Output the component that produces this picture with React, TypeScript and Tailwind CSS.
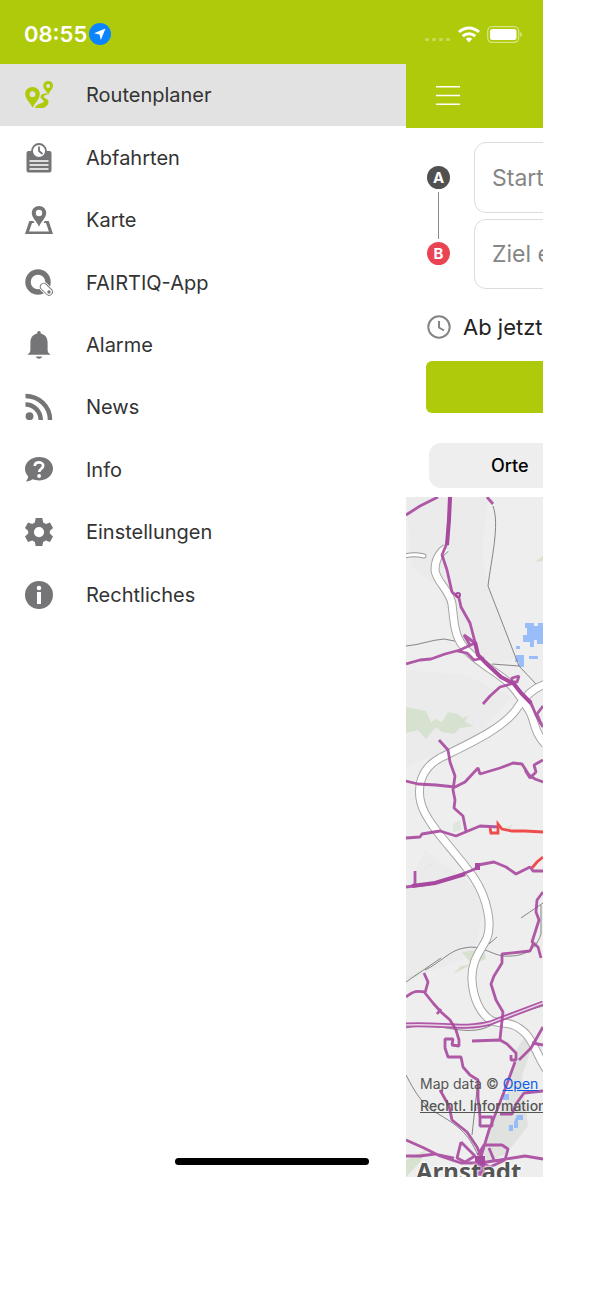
import { useState, type ReactNode } from "react";

const PlannerIcon = () => (
  <svg viewBox="0 0 28 28" className="size-7" fill="#afca0b" aria-hidden="true">
    <path fillRule="evenodd" d="M7.500 6C3.300 6 .2 9 .2 13c0 5 5 8.500 7.500 13.800C10 21.500 14.800 18 14.800 13c0-4-3.100-7-7.300-7Zm0 4.300a2.900 2.900 0 1 1 0 5.800 2.900 2.900 0 0 1 0-5.800Z" />
    <path fillRule="evenodd" d="M23.200 0c-2.800 0-4.900 2-4.900 4.800 0 3.600 3.500 5 4.900 9.200 1.300-4.200 4.800-5.600 4.800-9.200C28 2 25.900 0 23.200 0Zm0 2.900a2 2 0 1 1 0 4 2 2 0 0 1 0-4Z" />
    <path d="M21.500 12.200c-4 .2-6.200 2-5.900 4.100.3 2.100 3.500 2.500 3.200 4.300-.3 1.700-4.300 2-7.300 3.800L9.800 27h8.700c2.400-1.700 5-3.300 5-6.100 0-3.100-4.600-3.400-4.700-5.300 0-1.200 1.800-1.700 3.900-1.800Z" />
  </svg>
);

const DeparturesIcon = () => (
  <svg viewBox="0 0 28 30" className="h-[30px] w-7" aria-hidden="true">
    <path fill="#757577" d="M3.500 8h21a2 2 0 0 1 2 2v17.500a2 2 0 0 1-2 2h-21a2 2 0 0 1-2-2V10a2 2 0 0 1 2-2Z" />
    <circle cx="14" cy="8" r="7" fill="#fff" stroke="#757577" strokeWidth="1.800" />
    <path d="M14 3.500V8l3.500 3" fill="none" stroke="#757577" strokeWidth="1.800" />
    <path d="M4.500 18h19M4.500 22h19M4.500 26h19" stroke="#fff" strokeWidth="1.600" />
  </svg>
);

const MapIcon = () => (
  <svg viewBox="0 0 28 28" className="size-7" fill="#757577" aria-hidden="true">
    <path fillRule="evenodd" d="M14 0C9.800 0 6.800 3 6.800 7c0 5 5 8.200 7.200 13.700C16.200 15.200 21.200 12 21.200 7c0-4-3-7-7.200-7Zm0 3.800a3.200 3.200 0 1 1 0 6.400 3.200 3.200 0 0 1 0-6.400Z" />
    <path d="M4.300 15h4l1.200 2H7L4.100 25.500h19.800L21 17h-2.500l1.200-2h4L28 28H0Z" />
  </svg>
);

const FairtiqIcon = () => (
  <svg viewBox="0 0 28 28" className="size-7" aria-hidden="true">
    <circle cx="13" cy="13" r="10" fill="none" stroke="#757577" strokeWidth="5.500" />
    <path d="m18.800 17.800 5.200 5" stroke="#fff" strokeWidth="9.500" strokeLinecap="round" />
    <path d="m18.800 17.800 5.200 5" stroke="#757577" strokeWidth="7.800" strokeLinecap="round" />
    <path d="m18.800 17.800 5.200 5" stroke="#fff" strokeWidth="6" strokeLinecap="round" />
    <circle cx="24" cy="23" r="1.700" fill="#757577" />
  </svg>
);

const BellIcon = () => (
  <svg viewBox="0 0 28 28" className="size-7" fill="#757577" aria-hidden="true">
    <path d="M12.300 2.500a1.800 1.800 0 1 1 3.400 0c4.500 1 6.900 4.300 6.900 8.800V19c0 2 .8 3.200 3 4.700H2.400c2.200-1.500 3-2.700 3-4.700v-7.700c0-4.500 2.400-7.800 6.900-8.800Z" />
    <path d="M11 25.500h6c-.4 3-5.600 3-6 0Z" />
  </svg>
);

const NewsIcon = () => (
  <svg viewBox="0 0 28 28" className="size-7" fill="none" stroke="#757577" strokeWidth="4.500" aria-hidden="true">
    <circle cx="4.500" cy="23.200" r="3.900" fill="#757577" stroke="none" />
    <path d="M.5 11.500C9 11.500 15.800 18.500 15.800 27M.5 3C14 3 25 13.500 25 27" />
  </svg>
);

const InfoIcon = () => (
  <svg viewBox="0 0 28 28" className="size-7" aria-hidden="true">
    <path fill="#757577" d="M14 1C6.200 1 0 6.200 0 12.700c0 3.200 1.300 5.700 3.200 7.700C3 22.500 1.800 24 .8 25.500c3 0 5.200-1 6.900-2.200 2 .8 4 1.100 6.300 1.100 7.800 0 14-5.200 14-11.900S21.800 1 14 1Z" />
    <path d="M9.800 10c.2-4.800 8.400-4.500 8.400-.4 0 3.200-4 3.200-4 6.500" fill="none" stroke="#fff" strokeWidth="2.700" />
    <circle cx="14.100" cy="20" r="1.900" fill="#fff" />
  </svg>
);

const GearIcon = () => (
  <svg viewBox="0 0 28 28" className="size-7" fill="#757577" aria-hidden="true">
    <path fillRule="evenodd" d="M10.700 0h6.600l.9 4.400 2.600 1.500 4.200-1.400 3 5.400-3.200 3v2.700l3.200 3-3 5.300-4.200-1.400-2.600 1.500-.9 4h-6.600l-.9-4-2.600-1.500L3 23.900l-3-5.300 3.200-3v-2.700L0 9.900l3-5.400 4.200 1.400 2.600-1.500ZM14 9a5.100 5.100 0 1 0 0 10.200A5.100 5.100 0 0 0 14 9Z" />
  </svg>
);

const LegalIcon = () => (
  <svg viewBox="0 0 28 28" className="size-7" aria-hidden="true">
    <circle cx="14" cy="14" r="14" fill="#757577" />
    <circle cx="14" cy="7" r="2.300" fill="#fff" />
    <path fill="#fff" d="M12 11h4v12h-4z" />
  </svg>
);

const menu: { label: string; icon: ReactNode }[] = [
  { label: "Routenplaner", icon: <PlannerIcon /> },
  { label: "Abfahrten", icon: <DeparturesIcon /> },
  { label: "Karte", icon: <MapIcon /> },
  { label: "FAIRTIQ-App", icon: <FairtiqIcon /> },
  { label: "Alarme", icon: <BellIcon /> },
  { label: "News", icon: <NewsIcon /> },
  { label: "Info", icon: <InfoIcon /> },
  { label: "Einstellungen", icon: <GearIcon /> },
  { label: "Rechtliches", icon: <LegalIcon /> },
];

const motorways = [
  "M446 548C439 553 435 561 435 570C436 582 450 590 452 604C454 620 454 635 463 646C475 662 498 672 510 684C518 692 524 702 530 712C535 722 534 732 545 744",
  "M546 684C532 688 524 698 518 707C505 728 468 744 440 758C420 769 417 788 421 803C426 824 457 853 474 878C488 899 492 925 487 938C481 951 471 960 472 980C473 998 480 1014 492 1021C505 1025 512 1020 526 1034C535 1044 538 1058 548 1072",
];

const railways = [
  "M493 506C500 525 491 560 488 586L519 666L536 684",
  "M406 646C420 645 430 640 444 639L460 642M492 664L519 666",
  "M425 970C440 963 450 950 464 948C480 944 490 954 503 956C520 957 535 953 541 934V905",
  "M521 918L543 903M489 944L497 937",
  "M406 982L441 958M406 1075C416 1094 423 1106 440 1115C460 1127 470 1135 480 1160",
  "M478 1080L472 1135M406 1028C440 1019 470 1042 496 1022C515 1013 532 1009 543 1006",
];

const busLines = [
  "M406 515L420 506L438 497M487 497L493 504",
  "M450 497L449 520L447 543L442 555L447 570L452 592L459 598L461 607L470 623L475 642L478 655L488 665L501 677L514 684L521 693L531 703L536 715L543 727",
  "M406 664L420 660L431 659L445 654L460 650L475 643L464 635L470 645M457 651L467 653L474 660L484 658M483 704L490 696L500 687L511 684L512 678L519 676L517 682L509 682",
  "M439 740L448 750L450 762L455 776L453 790L455 800L454 808L463 816L466 831",
  "M406 781L418 784L436 785L455 787L465 782L478 768L480 774L500 768L513 763L522 764L529 775L535 779L543 782M525 770L530 778L536 772L534 765L543 760M541 724L537 714L543 706",
  "M406 838L420 837L422 834L440 831L456 836L468 831L480 826L499 827",
  "M406 887L430 884L450 879L475 869L478 865L494 862L506 867L516 874L530 867L533 871L543 871M415 884V871",
  "M543 892L537 900L536 912L539 920L532 942L538 947L541 958M534 942L530 951L502 954V963L494 976L491 984L496 1000L503 1012L500 1039",
  "M424 973L428 982L425 993L433 1003L441 1012L450 1020L456 1030L459 1040V1046L452 1045L453 1039H445V1048L448 1057H461L463 1067L470 1075L478 1080V1098L480 1117H492V1126H480V1117",
  "M472 1041L500 1040L507 1044L516 1053V1060H511V1055M519 1060L531 1048L543 1027M515 1062L504 1092L497 1110L489 1130L480 1160",
  "M440 1090L449 1106L452 1120L467 1132L477 1147L484 1163",
  "M406 1140L424 1148L440 1156L461 1163H480L500 1160L525 1156L543 1159M406 1156H420L435 1154L454 1158",
  "M461 1142L457 1158L465 1162L475 1156L461 1142M478 1155L484 1145H502L508 1149L505 1160L490 1167L480 1162L476 1177M489 1148L494 1160M543 1091L524 1093L516 1104L512 1114H500",
  "M406 997C414 990 418 991 426 992M437 1014L441 1009M532 1043L543 1045",
];

const RegionMap = () => (
  <svg viewBox="406 497 137 680" className="block h-full w-full" preserveAspectRatio="xMinYMin slice" aria-label="Karte" role="img">
    <path fill="#eeeeee" d="M406 497h137v680H406z" />
    <path fill="#ebebec" d="M406 497h82l-6 55 6 36 28 70-20 6-36-20-20-56-28-20ZM406 670l60 5 45 22-35 40-70 30ZM425 850l60 45-10 60-69 25v-90Z" />
    <path fill="#d4dfcb" d="M406 707l20 4 8 18-8 10-8-9-12 3ZM427 726l8-7 7 3 6-10 10 2 4 4 6-2-3 6 9 4-14 2-6 6-12-2-5-4-5 2ZM406 1160l20-10-6 12-14 15ZM453 974l20-10-12 2ZM462 952l22-3 2 10-14 6ZM535 562l8-6v5Z" opacity=".85" />
    <path fill="#dfe6db" d="M453 824l7-4 1 10-8 2ZM424 869l10-8-3 4ZM505 828l8-4-3 6ZM530 939l8 3-2 8ZM406 978l14-7-3 6Z" />
    <path fill="#dcdedc" d="M516 1050l12-18 4 14-10 30 6 50-22 28-24 10 8-38 16-26Z" opacity=".8" />
    <g fill="#8ab4fa">
      <path d="M525 623h9v3h4v-3h5v21h-6v-4h-3v7h-4v-5h-7v-7h4v-7h-2ZM516 646h4v3h-4ZM516 655h8v12h-5v-5h-4ZM529 656h9v3h-9ZM517 1115h6v5h-5v8h-4v-6ZM509 1125h4v6h-4ZM503 1094h6v6h-6Z" opacity=".85" />
    </g>
    <g fill="none" stroke="#858585" strokeWidth="1">
      {railways.map((d) => <path key={d} d={d} />)}
    </g>
    <path d="M402 557Q412 553 424 556" fill="none" stroke="#999" strokeWidth="5" strokeLinecap="round" />
    <path d="M402 557Q412 553 424 556" fill="none" stroke="#fff" strokeWidth="3" strokeLinecap="round" />
    <g fill="none">
      {motorways.map((d) => <path key={d} d={d} stroke="#a6a6a6" strokeWidth="9" />)}
      {motorways.map((d) => <path key={d} d={d} stroke="#fff" strokeWidth="7" />)}
    </g>
    <path d="M406 1025C440 1023 465 1030 490 1023L543 1003" fill="none" stroke="#b057a8" strokeWidth="5" />
    <path d="M406 1025C440 1023 465 1030 490 1023L543 1003" fill="none" stroke="#e7d7e5" strokeWidth="1.500" />
    <g fill="none" stroke="#a8489f" strokeWidth="2.800" strokeLinejoin="bevel" opacity=".9">
      {busLines.map((d) => <path key={d} d={d} />)}
    </g>
    <path d="M450 497L449 520L447 545M475 642L478 655L488 665L501 677L514 684L521 693L531 703" fill="none" stroke="#a8489f" strokeWidth="4" />
    <path d="M412 886L435 883L465 874" fill="none" stroke="#a8489f" strokeWidth="4" />
    <path d="M490 828L491 833H498V824L502 829L512 831H525L543 832M532 868L537 862L543 857" fill="none" stroke="#f04b4b" strokeWidth="2.800" />
    <circle cx="458" cy="595" r="2" fill="none" stroke="#a8489f" strokeWidth="2" />
    <path d="M475 863h5v7h-5ZM475 1156h10v20h-10Z" fill="#a8489f" />
  </svg>
);

const StatusBar = () => (
  <header className="flex h-16 items-center bg-[#afca0b] pt-1 pr-5 pl-6">
    <span className="text-[22px] leading-7 font-semibold text-white">08:55</span>
    <svg viewBox="0 0 22 22" className="ml-[2px] size-[22px]" aria-hidden="true">
      <circle cx="11" cy="11" r="11" fill="#0a84ff" />
      <path fill="#fff" d="M16.500 5.500 11.800 17l-1.300-5.500L5 10.200Z" />
    </svg>
    <svg viewBox="0 0 26 6" className="mt-3 ml-auto h-[6px] w-[26px]" fill="#fff" opacity=".3" aria-hidden="true">
      <rect x="1" y="1" width="4" height="3" rx="1" /><rect x="8" y="1" width="4" height="3" rx="1" /><rect x="15" y="1" width="4" height="3" rx="1" /><rect x="22" y="1" width="4" height="3" rx="1" />
    </svg>
    <svg viewBox="0 0 22 17" className="ml-2 h-[17px] w-[22px]" fill="none" stroke="#fff" strokeWidth="3" aria-hidden="true">
      <path d="M1 6C7 .5 15 .5 21 6M4.700 10.200c3.700-3.300 8.900-3.300 12.600 0" />
      <path d="M7.800 12.800c1.900-1.600 4.500-1.600 6.400 0L11 16.500Z" fill="#fff" stroke="none" />
    </svg>
    <svg viewBox="0 0 36 17" className="ml-[7px] h-[17px] w-9" aria-hidden="true">
      <rect x=".7" y=".7" width="31" height="15.600" rx="4.500" fill="none" stroke="#fff" strokeOpacity=".5" strokeWidth="1.300" />
      <rect x="3" y="3" width="26.500" height="11" rx="2.500" fill="#fff" />
      <path d="M33.300 6c2 .6 2 4.400 0 5Z" fill="#fff" fillOpacity=".6" />
    </svg>
  </header>
);

const badge = "flex size-[23px] items-center justify-center rounded-full text-[15px] leading-none font-bold text-white";
const field = "w-full rounded-xl border border-[#dcdcdc] bg-white px-[17px] text-[23px] text-gray-800 outline-none placeholder:text-[#858585]";

export default function App() {
  const [active, setActive] = useState("Routenplaner");

  return (
    <div className="min-h-screen bg-white pr-[57px] font-['Inter','Liberation_Sans',sans-serif]">
      <div className="relative overflow-hidden">
        <StatusBar />
        <div className="flex">
          <nav className="w-[406px] shrink-0 bg-white" aria-label="Hauptmenü">
            <ul className="grid h-[562px] auto-rows-fr">
              {menu.map(({ label, icon }) => (
                <li key={label} className={active === label ? "bg-[#e2e2e2]" : "bg-white"}>
                  <button type="button" onClick={() => setActive(label)} className="flex h-full w-full items-center gap-[33px] pl-[25px] text-left text-xl text-[#333]">
                    <span className="flex w-7 justify-center">{icon}</span>
                    <span>{label}</span>
                  </button>
                </li>
              ))}
            </ul>
          </nav>

          <main className="min-w-0 flex-1 overflow-hidden">
            <div className="flex h-16 items-center bg-[#afca0b] pl-[30px]">
              <button type="button" aria-label="Menü">
                <svg viewBox="0 0 24 20" className="h-5 w-6" stroke="#fff" strokeWidth="1.600" aria-hidden="true">
                  <path d="M0 .8h24M0 9.500h24M0 18.200h24" />
                </svg>
              </button>
            </div>

            <form className="w-[543px] px-5" onSubmit={(e) => e.preventDefault()}>
              <div className="flex gap-6 pt-[14px] pl-px">
                <div className="flex flex-col items-center py-6" aria-hidden="true">
                  <span className={`${badge} bg-[#505050]`}>A</span>
                  <span className="my-[3px] w-px flex-1 bg-[#8c8c8c]" />
                  <span className={`${badge} bg-[#e94354]`}>B</span>
                </div>
                <div className="flex flex-1 flex-col gap-[6px]">
                  <input aria-label="Start" placeholder="Start eingeben" className={`${field} h-[71px]`} />
                  <input aria-label="Ziel" placeholder="Ziel eingeben" className={`${field} h-[70px]`} />
                </div>
              </div>
              <button type="button" className="mt-6 flex h-7 items-center gap-3 pl-px text-[22px] text-[#222]">
                <svg viewBox="0 0 24 24" className="size-6" fill="none" stroke="#858585" strokeWidth="2" aria-hidden="true">
                  <circle cx="12" cy="12" r="10.700" /><path d="M12 6v6.500l5 3" />
                </svg>
                Ab jetzt
              </button>
              <button type="submit" aria-label="Verbindung suchen" className="mt-5 block h-[52px] w-full rounded-md bg-[#afca0b]" />
            </form>

            <div className="mt-[30px] flex h-[45px] w-[543px] pr-6 pl-[23px]">
              <button type="button" className="flex-1 rounded-l-xl bg-[#eee] pl-[62px] text-left text-lg font-medium text-black">Orte</button>
            </div>

            <section className="relative mt-[9px] h-[680px] overflow-hidden" aria-label="Karte">
              <RegionMap />
              <div className="absolute top-[576px] left-[14px] text-sm leading-[22px] whitespace-nowrap text-[#555]">
                <p>Map data © <a href="#osm" className="text-[#0b5be8] underline">Open</a></p>
                <a href="#rechtliches" className="block font-medium underline">Rechtl. Information</a>
              </div>
              <span className="absolute top-[656px] left-[10px] font-['Noto_Sans',sans-serif] text-2xl leading-9 font-bold text-[#555] [text-shadow:0_0_3px_#fff,0_0_3px_#fff,0_0_2px_#fff]">Arnstadt</span>
            </section>
          </main>
        </div>
        <div className="absolute bottom-3 left-[175px] h-[7px] w-[194px] rounded-full bg-black" />
      </div>
    </div>
  );
}
